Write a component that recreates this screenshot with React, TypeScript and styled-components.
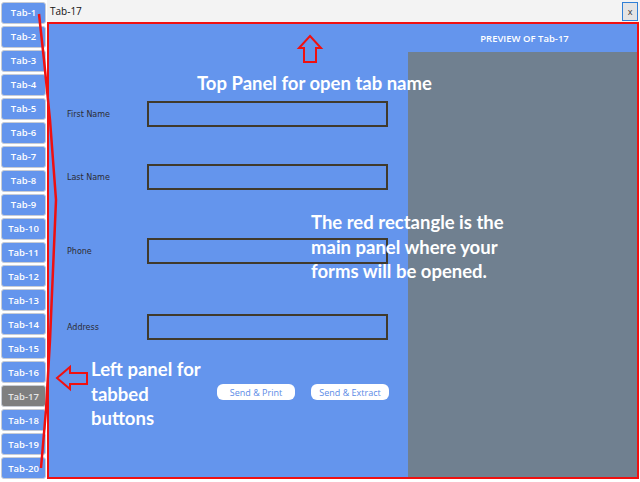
import React, { FC } from "react"
import styled, { createGlobalStyle } from "styled-components"

const GlobalStyle = createGlobalStyle`
  html, body {
    margin: 0;
    padding: 0;
    background: #ffffff;
  }
  * {
    box-sizing: border-box;
  }
`

const BLUE = "#6495ed"
const RED = "#f01010"

const Page = styled.div`
  position: relative;
  width: 640px;
  height: 482px;
  display: flex;
  overflow: hidden;
  background: #ffffff;
`

const TabColumn = styled.div`
  width: 47px;
  display: flex;
  flex-direction: column;
  gap: 2px;
  padding: 2px 1px 3px 1px;
`

const TabButton = styled.button<{ $active?: boolean }>`
  flex: 1;
  border: 1px solid #c8ccd4;
  border-radius: 3px;
  background: ${p => (p.$active ? "#7f7f7f" : BLUE)};
  color: ${p => (p.$active ? "#e6e6e6" : "#ffffff")};
  font-family: "Open Sans", "Noto Sans", sans-serif;
  font-size: 9.5px;
  font-weight: 600;
  padding: 0;
  cursor: pointer;
`

const Content = styled.div`
  flex: 1;
  display: flex;
  flex-direction: column;
`

const TopBar = styled.div`
  height: 22px;
  display: flex;
  align-items: center;
  justify-content: space-between;
  padding: 0 2px 0 3px;
  background: #f3f3f3;
  font-family: "Open Sans", "Noto Sans", sans-serif;
  font-size: 10px;
  color: #111;
`

const CloseButton = styled.button`
  width: 16px;
  height: 19px;
  border: 1px solid #2f7fd6;
  background: #e4e4e4;
  font-family: "Open Sans", sans-serif;
  font-size: 9px;
  color: #333;
  padding: 0;
`

const MainPanel = styled.div`
  flex: 1;
  margin: 0 1px 3px 0;
  border: 2px solid ${RED};
  background: ${BLUE};
  display: grid;
  grid-template-columns: 359px 1fr;
`

const Form = styled.div`
  display: flex;
  flex-direction: column;
  padding: 77px 0 0 18px;
`

const Row = styled.div<{ $top: number }>`
  display: flex;
  align-items: center;
  height: 26px;
  margin-top: ${p => p.$top}px;
`

const Label = styled.label`
  width: 80px;
  font-family: "DejaVu Sans", sans-serif;
  font-size: 8px;
  color: #2c2c34;
`

const Field = styled.input`
  width: 241px;
  height: 26px;
  border: 2px solid #403a2c;
  background: transparent;
  outline: none;
`

const ButtonRow = styled.div`
  display: flex;
  gap: 16px;
  margin: 44px 0 0 150px;
`

const PillButton = styled.button`
  width: 78px;
  height: 16px;
  border: none;
  border-radius: 6px;
  background: #ffffff;
  color: #5a8ae6;
  font-family: "Open Sans", "Noto Sans", sans-serif;
  font-size: 9px;
  padding: 0;
`

const Preview = styled.div`
  display: flex;
  flex-direction: column;
`

const PreviewTitle = styled.div`
  height: 28px;
  display: flex;
  align-items: center;
  justify-content: center;
  padding-left: 4px;
  font-family: "Open Sans", "Noto Sans", sans-serif;
  font-size: 9.5px;
  font-weight: 600;
  color: #ffffff;
`

const PreviewBox = styled.div`
  flex: 1;
  background: #708090;
`

const Overlay = styled.svg`
  position: absolute;
  left: 0;
  top: 0;
  pointer-events: none;
`

const Note = styled.div<{ $x: number; $y: number }>`
  position: absolute;
  left: ${p => p.$x}px;
  top: ${p => p.$y}px;
  font-family: Lato, "Open Sans", sans-serif;
  font-weight: 700;
  font-size: 18.5px;
  line-height: 24.5px;
  color: #ffffff;
  white-space: nowrap;
  pointer-events: none;
`

const tabs = Array.from({ length: 20 }, (_, i) => `Tab-${i + 1}`)
const active = "Tab-17"

const fields = [
  { label: "First Name", top: 0 },
  { label: "Last Name", top: 37 },
  { label: "Phone", top: 48 },
  { label: "Address", top: 50 },
]

const App: FC = () => {
  return (
    <Page>
      <GlobalStyle />
      <TabColumn>
        {tabs.map(t => (
          <TabButton key={t} $active={t === active}>{t}</TabButton>
        ))}
      </TabColumn>
      <Content>
        <TopBar>
          <span>{active}</span>
          <CloseButton>x</CloseButton>
        </TopBar>
        <MainPanel>
          <Form>
            {fields.map(f => (
              <Row key={f.label} $top={f.top}>
                <Label>{f.label}</Label>
                <Field />
              </Row>
            ))}
            <ButtonRow>
              <PillButton>Send &amp; Print</PillButton>
              <PillButton>Send &amp; Extract</PillButton>
            </ButtonRow>
          </Form>
          <Preview>
            <PreviewTitle>PREVIEW OF {active}</PreviewTitle>
            <PreviewBox />
          </Preview>
        </MainPanel>
      </Content>

      {/* annotation layer drawn on top of the screenshot */}
      <Overlay width="640" height="482" viewBox="0 0 640 482">
        <polyline
          points="39,14 44,60 50,120 56,200 53,270 50,340 46,410 41,468"
          fill="none"
          stroke={RED}
          strokeWidth="2.5"
          strokeLinejoin="round"
        />
        <polygon
          points="310,36 321,48 316,48 316,62 304,62 304,48 299,48"
          fill="none"
          stroke={RED}
          strokeWidth="2"
        />
        <polygon
          points="57,378 70,367 70,373 87,373 87,384 70,384 70,389"
          fill="none"
          stroke={RED}
          strokeWidth="2"
        />
      </Overlay>
      <Note $x={197} $y={71}>Top Panel for open tab name</Note>
      <Note $x={311} $y={210}>
        The red rectangle is the
        <br />
        main panel where your
        <br />
        forms will be opened.
      </Note>
      <Note $x={91} $y={357}>
        Left panel for
        <br />
        tabbed
        <br />
        buttons
      </Note>
    </Page>
  )
}

export default App
